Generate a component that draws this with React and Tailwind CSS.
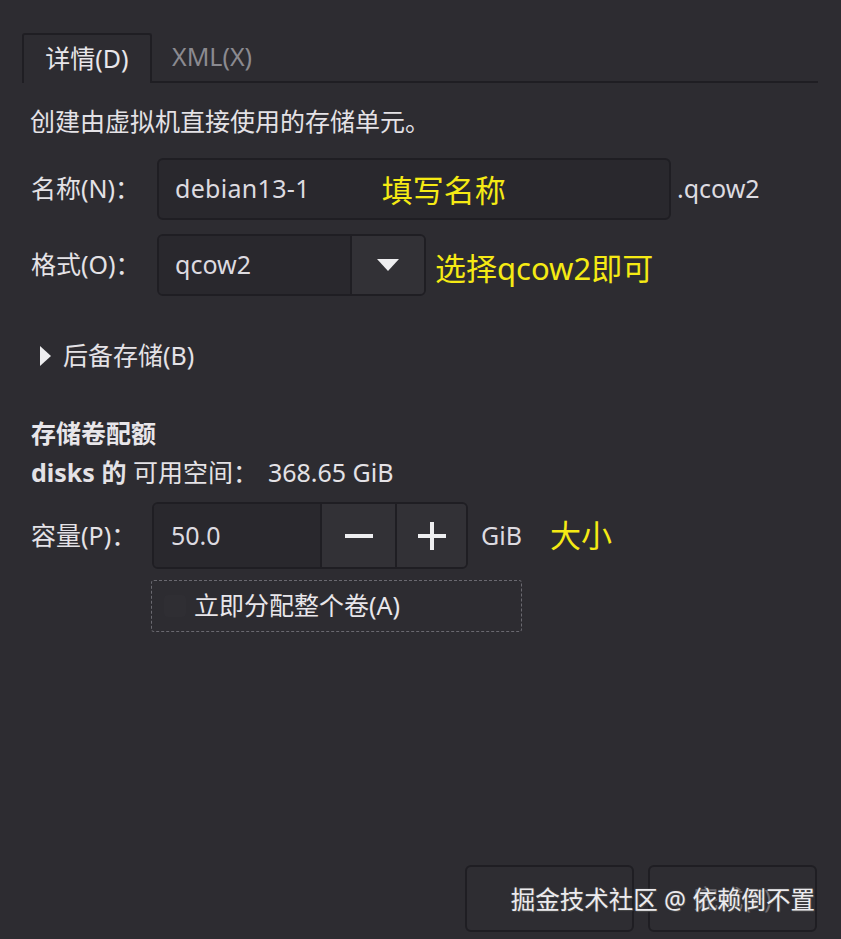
import React from 'react';

const font = { fontFamily: '"Noto Sans", "Open Sans", "Noto Sans CJK SC", sans-serif' };

const Label = ({ children, className = '' }) => (
    <div className={`shrink-0 pl-[31px] text-[25px] text-[#e4e2e6] ${className}`}>{children}</div>
);

export default function App() {
    return (
        <div
            className="w-[841px] h-[939px] bg-[#2d2c31] flex flex-col text-[#e4e2e6] overflow-hidden"
            style={{ fontFamily: '"Noto Sans", "Noto Sans CJK SC", sans-serif' }}
        >
            {/* Tabs */}
            <div className="mt-[33px] ml-[22px] w-[796px] flex items-end border-b-2 border-[#1f1e23] h-[50px]">
                <div className="h-[50px] w-[130px] border-2 border-b-0 border-[#1f1e23] rounded-t-[3px] flex items-center justify-center text-[25px] text-[#e8e6ea] -mb-[2px] bg-[#2d2c31]">
                    详情(D)
                </div>
                <div className="h-[48px] px-[20px] flex items-center text-[25px] text-[#8b8a90]">XML(X)</div>
            </div>

            {/* Description */}
            <div className="mt-[22px] pl-[30px] text-[25px] leading-[32px] text-[#e4e2e6]">创建由虚拟机直接使用的存储单元。</div>

            {/* Name */}
            <div className="mt-[21px] flex items-center h-[62px]">
                <Label className="w-[157px]">名称(N)：</Label>
                <div className="w-[514px] h-[62px] bg-[#29282d] border-2 border-[#1f1e23] rounded-[6px] flex items-center pl-[16px] relative">
                    <span className="text-[25px] tracking-[0.3px] text-[#dddbe0]">debian13-1</span>
                    <span className="ml-[72px] mt-[3px] text-[31px] text-[#f5ea14]">填写名称</span>
                </div>
                <span className="ml-[6px] text-[25px] text-[#dddbe0]">.qcow2</span>
            </div>

            {/* Format */}
            <div className="mt-[14px] flex items-center h-[62px]">
                <Label className="w-[157px]">格式(O)：</Label>
                <div className="w-[269px] h-[62px] border-2 border-[#1f1e23] rounded-[6px] flex overflow-hidden">
                    <div className="w-[193px] bg-[#29282d] flex items-center pl-[16px] text-[25px] text-[#dddbe0] border-r-2 border-[#1f1e23]">
                        qcow2
                    </div>
                    <div className="flex-1 bg-[#323136] flex items-center justify-center">
                        <svg width="22" height="13" viewBox="0 0 22 13">
                            <path d="M0 0 L22 0 L11 12 Z" fill="#eeeef0" />
                        </svg>
                    </div>
                </div>
                <span className="ml-[9px] mt-[6px] text-[31px] text-[#f5ea14]">选择qcow2即可</span>
            </div>

            {/* Expander */}
            <div className="mt-[44px] flex items-center pl-[40px] h-[32px]">
                <svg width="11" height="20" viewBox="0 0 11 20">
                    <path d="M0 0 L11 10 L0 20 Z" fill="#eeeef0" />
                </svg>
                <span className="ml-[12px] text-[25px] text-[#e4e2e6]">后备存储(B)</span>
            </div>

            {/* Quota */}
            <div className="mt-[45px] pl-[31px] text-[25px] font-bold leading-[32px] text-[#e8e6ea]">存储卷配额</div>
            <div className="mt-[7px] pl-[31px] text-[25px] leading-[32px] text-[#e4e2e6]">
                <span className="font-bold">disks 的</span> 可用空间：<span className="ml-[10px]">368.65 GiB</span>
            </div>

            {/* Capacity */}
            <div className="mt-[14px] flex items-center h-[67px]">
                <Label className="w-[152px]">容量(P)：</Label>
                <div className="w-[316px] h-[67px] border-2 border-[#1f1e23] rounded-[6px] flex overflow-hidden">
                    <div className="w-[168px] bg-[#29282d] flex items-center pl-[17px] text-[25px] text-[#dddbe0] border-r-2 border-[#1f1e23]">
                        50.0
                    </div>
                    <div className="w-[75px] bg-[#323136] flex items-center justify-center border-r-2 border-[#1f1e23]">
                        <div className="w-[28px] h-[4px] bg-[#eeeef0]" />
                    </div>
                    <div className="flex-1 bg-[#323136] flex items-center justify-center relative">
                        <div className="w-[28px] h-[4px] bg-[#eeeef0]" />
                        <div className="absolute w-[4px] h-[28px] bg-[#eeeef0]" />
                    </div>
                </div>
                <span className="ml-[13px] text-[25px] text-[#dddbe0]">GiB</span>
                <span className="ml-[28px] text-[31px] text-[#f5ea14]">大小</span>
            </div>

            {/* Checkbox */}
            <div className="mt-[11px] ml-[151px] w-[371px] h-[52px] border border-dashed border-[#6a6970] rounded-[3px] flex items-center">
                <div className="ml-[12px] w-[22px] h-[22px] rounded-[4px] bg-[#2f2e33]" />
                <span className="ml-[8px] text-[25px] text-[#e8e6ea]">立即分配整个卷(A)</span>
            </div>

            {/* Buttons */}
            <div className="mt-auto mb-[7px] flex justify-end gap-[14px] pr-[24px] relative">
                <div className="w-[169px] h-[67px] rounded-[6px] border-2 border-[#1f1e23] bg-[#2e2d32]" />
                <div className="w-[169px] h-[67px] rounded-[6px] border-2 border-[#1f1e23] bg-[#2e2d32] flex items-center justify-center text-[25px] text-[#6f6e74]">
                    完成(F)
                </div>
                <div
                    className="absolute right-[26px] top-[17px] text-[24.5px] text-[#ecebee]"
                    style={{ ...font, textShadow: '0 0 2px #555, 1px 1px 1px #444' }}
                >
                    掘金技术社区 @ 依赖倒不置
                </div>
            </div>
        </div>
    );
}
